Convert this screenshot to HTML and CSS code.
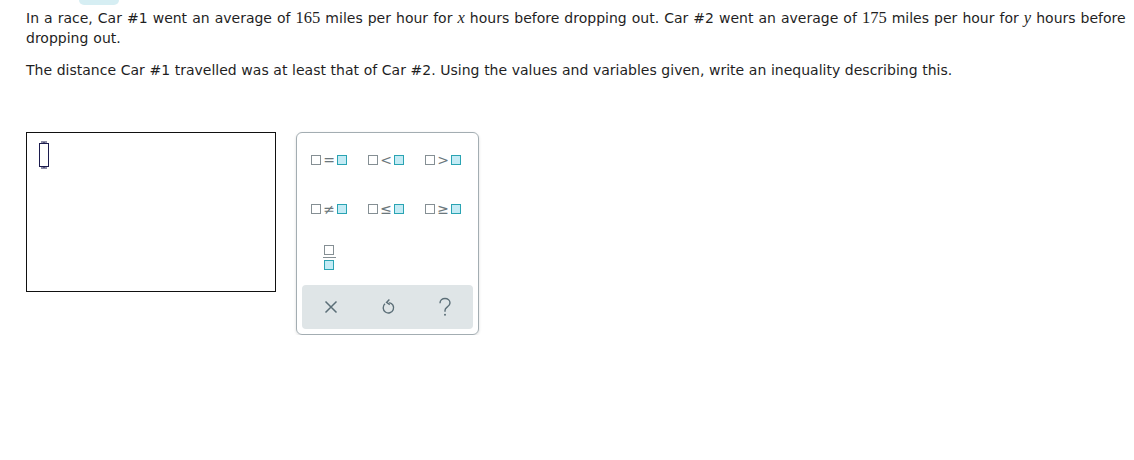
FILE: index.html
```html
<!DOCTYPE html>
<html>
<head>
<meta charset="utf-8">
<link rel="stylesheet" href="styles.css">
</head>
<body>
<div class="tab-peek"></div>
<div class="question">
  <p class="para first">In a race, Car #1 went an average of <span class="num">165</span> miles per hour for <span class="var">x</span> hours before dropping out. Car #2 went an average of <span class="num">175</span> miles per hour for <span class="var">y</span> hours before dropping out.</p>
  <p class="para second">The distance Car #1 travelled was at least that of Car #2. Using the values and variables given, write an inequality describing this.</p>
</div>
<div class="work">
  <div class="answer">
    <svg class="cursor" width="14" height="28" viewBox="0 0 14 28">
      <rect x="2.5" y="2.5" width="9" height="23" fill="none" stroke="#1c1c4e" stroke-width="1"/>
      <path d="M4 1h6M7 1v2M4 27h6M7 25v2" stroke="#1c1c4e" stroke-width="1" fill="none"/>
    </svg>
  </div>
  <div class="palette">
    <div class="keys">
      <div class="key"><span class="bx"></span><span class="op">=</span><span class="bx t"></span></div>
      <div class="key"><span class="bx"></span><span class="op">&lt;</span><span class="bx t"></span></div>
      <div class="key"><span class="bx"></span><span class="op">&gt;</span><span class="bx t"></span></div>
      <div class="key"><span class="bx"></span><span class="op">≠</span><span class="bx t"></span></div>
      <div class="key"><span class="bx"></span><span class="op">≤</span><span class="bx t"></span></div>
      <div class="key"><span class="bx"></span><span class="op">≥</span><span class="bx t"></span></div>
      <div class="key"><span class="frac"><span class="bx"></span><span class="bar"></span><span class="bx t"></span></span></div>
    </div>
    <div class="tools">
      <div class="tool">
        <svg width="16" height="16" viewBox="0 0 16 16"><path d="M2.5 2.5l11 11M13.5 2.5l-11 11" stroke="#5b6e77" stroke-width="1.5" fill="none"/></svg>
      </div>
      <div class="tool">
        <svg width="16" height="18" viewBox="0 0 16 18"><path d="M5 5.8A5.2 5.2 0 1 0 9.2 4.6" stroke="#5b6e77" stroke-width="1.4" fill="none"/><path d="M9.4 1.6L6.6 4.4 9.8 6.6" stroke="#5b6e77" stroke-width="1.4" fill="none"/></svg>
      </div>
      <div class="tool">
        <svg width="14" height="20" viewBox="0 0 14 20"><path d="M2 6.2C2 3.4 4.2 1.5 7 1.5s5 1.8 5 4.4c0 2.4-1.6 3.3-3.2 4.4C7.5 11.2 7 12 7 13.6v1.2" stroke="#5b6e77" stroke-width="1.4" fill="none"/><circle cx="7" cy="17.8" r="1" fill="#5b6e77"/></svg>
      </div>
    </div>
  </div>
</div>
</body>
</html>
```
FILE: styles.css
```css
html, body {
  margin: 0;
  padding: 0;
  background: #ffffff;
}
body {
  position: relative;
  font-family: "DejaVu Sans", Verdana, sans-serif;
  font-size: 14px;
  color: #1f1f1f;
  padding: 8px 0 0 26px;
}
.tab-peek {
  position: absolute;
  left: 79px;
  top: 0;
  width: 40px;
  height: 5px;
  background: #d6eef3;
  border-radius: 0 0 8px 8px;
}
.question {
  width: 1106px;
}
.para {
  margin: 0;
  line-height: 20px;
}
.para.first {
  word-spacing: 0.6px;
}
.para.second {
  margin-top: 12px;
  word-spacing: 0.2px;
}
.num {
  font-family: "Liberation Serif", "Times New Roman", serif;
  font-size: 16.5px;
}
.var {
  font-family: "Liberation Serif", "Times New Roman", serif;
  font-style: italic;
  font-size: 16.5px;
}
.work {
  display: flex;
  align-items: flex-start;
  gap: 20px;
  margin-top: 52px;
}
.answer {
  width: 238px;
  height: 150px;
  border: 1px solid #111;
  padding: 8px 0 0 10px;
  box-sizing: content-box;
}
.cursor {
  display: block;
}
.palette {
  width: 171px;
  padding: 2px 5px 5px;
  border: 1px solid #a3adb2;
  border-radius: 6px;
  box-shadow: 0 1px 3px rgba(0,0,0,0.14);
}
.keys {
  display: grid;
  grid-template-columns: repeat(3, 57px);
  grid-auto-rows: 49px;
}
.key {
  display: flex;
  align-items: center;
  justify-content: center;
  gap: 2px;
  margin-left: -3px;
}
.bx {
  display: block;
  width: 8px;
  height: 8px;
  border: 1.5px solid #858f94;
  background: #fff;
}
.bx.t {
  border-color: #2aa4b3;
  background: #c4ebf5;
}
.op {
  font-size: 14px;
  color: #6b777c;
  line-height: 1;
  width: 12px;
  text-align: center;
}
.frac {
  display: flex;
  flex-direction: column;
  align-items: center;
  gap: 2px;
}
.bar {
  display: block;
  width: 13px;
  height: 1.5px;
  background: #858f94;
}
.tools {
  margin-top: 3px;
  height: 44px;
  background: #dfe5e7;
  border-radius: 4px;
  display: grid;
  grid-template-columns: repeat(3, 1fr);
  align-items: center;
  justify-items: center;
}
.tool svg {
  display: block;
}
```
